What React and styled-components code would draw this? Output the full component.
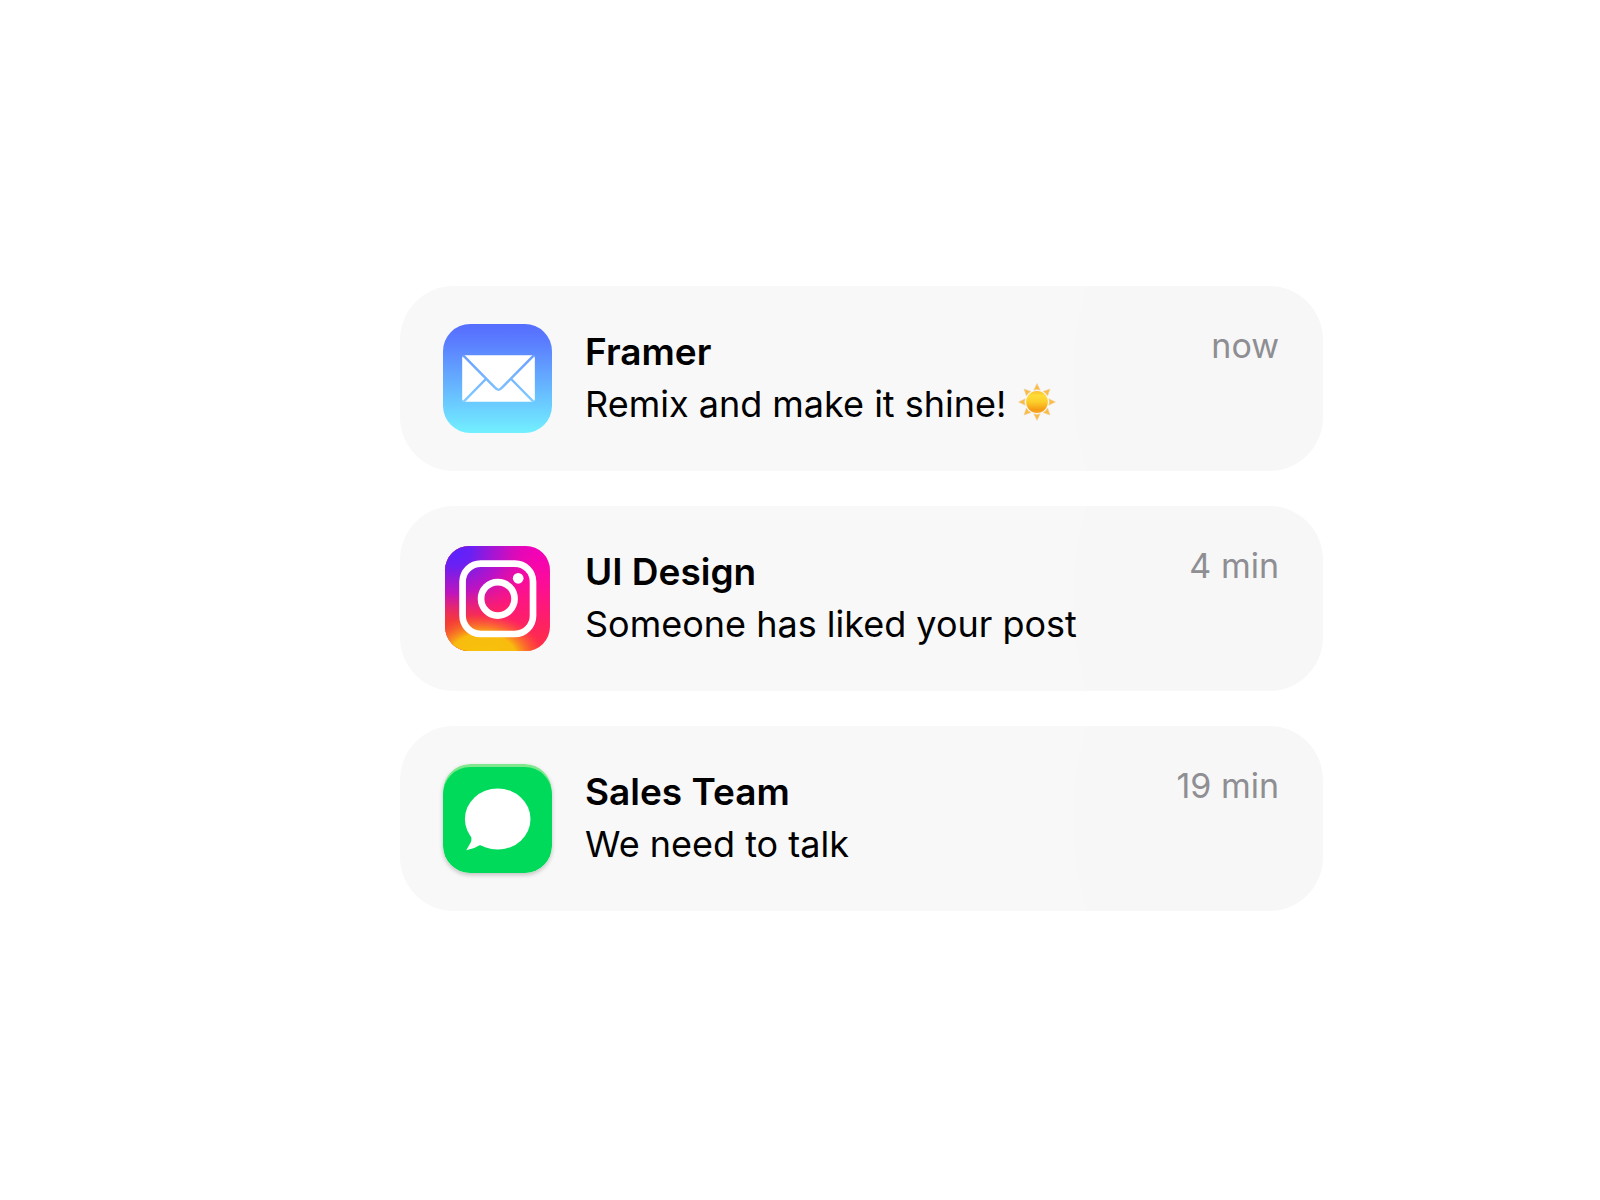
import React from "react";
import styled, { createGlobalStyle } from "styled-components";

const notifications = [
  { title: "Framer", message: "Remix and make it shine!", time: "now", Icon: MailIcon, sunny: true },
  { title: "UI Design", message: "Someone has liked your post", time: "4 min", Icon: InstagramIcon },
  { title: "Sales Team", message: "We need to talk", time: "19 min", Icon: MessagesIcon },
];

export default function App() {
  return (
    <>
      <GlobalStyle />
      <Page>
        <List>
          {notifications.map(({ title, message, time, Icon, sunny }) => (
            <Card key={title}>
              <Icon />
              <Content>
                <Title>{title}</Title>
                <Message>
                  {message}
                  {sunny && <Sun />}
                </Message>
              </Content>
              <Time>{time}</Time>
            </Card>
          ))}
        </List>
      </Page>
    </>
  );
}

function MailIcon() {
  return (
    <AppIcon viewBox="0 0 108 108" role="img" aria-label="Mail">
      <defs>
        <linearGradient id="mail-bg" x1="0" y1="0" x2="0" y2="1">
          <stop offset="0" stopColor="#566eff" />
          <stop offset="0.15" stopColor="#5a7bff" />
          <stop offset="1" stopColor="#72f0ff" />
        </linearGradient>
        <linearGradient id="mail-line" gradientUnits="userSpaceOnUse" x1="0" y1="30" x2="0" y2="78">
          <stop offset="0" stopColor="#6b9dff" />
          <stop offset="1" stopColor="#83ceff" />
        </linearGradient>
      </defs>
      <rect width="108" height="108" rx="27" fill="url(#mail-bg)" />
      <rect x="19" y="31" width="72" height="46" rx="3" fill="#fff" />
      <g fill="none" stroke="url(#mail-line)" strokeWidth="2.4">
        <path d="M20 31 51.5 63Q55 67.500 58.500 63L90 31" />
        <path d="M20.500 77 42.500 54.500M89.500 77 67.500 54.500" />
      </g>
    </AppIcon>
  );
}

function InstagramIcon() {
  return (
    <AppIcon viewBox="0 0 108 108" role="img" aria-label="Instagram">
      <defs>
        <linearGradient id="ig-base" x1="0" y1="0" x2="0" y2="1">
          <stop offset="0" stopColor="#f000bd" />
          <stop offset="0.35" stopColor="#fc0c98" />
          <stop offset="1" stopColor="#ff3040" />
        </linearGradient>
        <linearGradient id="ig-left" x1="0" y1="0" x2="1" y2="0">
          <stop offset="0" stopColor="#f33c35" />
          <stop offset="0.2" stopColor="#f33c35" stopOpacity="0.85" />
          <stop offset="0.7" stopColor="#ff2060" stopOpacity="0" />
        </linearGradient>
        <radialGradient id="ig-violet" cx="0.08" cy="0.05" r="0.8" gradientTransform="translate(0 0.005) scale(1 0.84)">
          <stop offset="0" stopColor="#5a22ff" />
          <stop offset="0.22" stopColor="#6b20f2" />
          <stop offset="0.6" stopColor="#b810cc" stopOpacity="0.9" />
          <stop offset="1" stopColor="#e80ca8" stopOpacity="0" />
        </radialGradient>
        <radialGradient id="ig-yellow" cx="0.36" cy="1.06" r="0.58" gradientTransform="translate(0 0.3) scale(1 0.72)">
          <stop offset="0" stopColor="#f7c40a" />
          <stop offset="0.55" stopColor="#f8bb0e" />
          <stop offset="1" stopColor="#fb6a26" stopOpacity="0" />
        </radialGradient>
      </defs>
      <rect x="2" y="2" width="104" height="104" rx="24" fill="url(#ig-base)" />
      <rect x="2" y="2" width="104" height="104" rx="24" fill="url(#ig-left)" />
      <rect x="2" y="2" width="104" height="104" rx="24" fill="url(#ig-violet)" />
      <rect x="2" y="2" width="104" height="104" rx="24" fill="url(#ig-yellow)" />
      <g fill="none" stroke="#fff" strokeWidth="6.6">
        <rect x="19.400" y="19.400" width="69.800" height="69.800" rx="18" />
        <circle cx="54.300" cy="54.300" r="16.600" />
      </g>
      <circle cx="74.500" cy="34" r="5.300" fill="#fff" />
    </AppIcon>
  );
}

function MessagesIcon() {
  return (
    <ShadowIcon viewBox="0 0 108 108" role="img" aria-label="Messages">
      <defs>
        <clipPath id="messages-shape">
          <rect width="108" height="108" rx="27" />
        </clipPath>
      </defs>
      <g clipPath="url(#messages-shape)">
        <rect width="108" height="108" fill="#7fe88f" />
        <rect y="3" width="108" height="108" rx="27" fill="#00da5a" />
      </g>
      <ellipse cx="54.200" cy="54.500" rx="32.500" ry="30.300" fill="#fff" />
      <path d="M26 69Q30 73 27 78.500L23 85.500Q31 84 36.800 80.200L46 83 40 66Z" fill="#fff" />
    </ShadowIcon>
  );
}

function Sun() {
  const rays = [0, 45, 90, 135, 180, 225, 270, 315];
  return (
    <Emoji viewBox="0 0 38 38" role="img" aria-label="Sun">
      <defs>
        <linearGradient id="sun-disc" x1="0" y1="0" x2="0" y2="1">
          <stop offset="0" stopColor="#fbc02d" />
          <stop offset="0.2" stopColor="#ffdc38" />
          <stop offset="0.5" stopColor="#fdce2a" />
          <stop offset="0.85" stopColor="#f59c14" />
          <stop offset="1" stopColor="#f6a92a" />
        </linearGradient>
      </defs>
      {rays.map((angle) => (
        <path
          key={angle}
          d="M19 .6 22.200 7.200Q19 6 15.800 7.200Z"
          transform={`rotate(${angle} 19 19)`}
          fill="#f8bd40"
          stroke="#f3cfa6"
          strokeWidth="0.6"
        />
      ))}
      <circle cx="19" cy="19" r="10.900" fill="url(#sun-disc)" />
    </Emoji>
  );
}

const GlobalStyle = createGlobalStyle`
  * {
    box-sizing: border-box;
  }
  body {
    margin: 0;
    background: #fff;
    font-family: Inter, "Liberation Sans", sans-serif;
  }
`;

const Page = styled.main`
  min-height: 100vh;
  display: flex;
  align-items: center;
  padding: 0 277px 3px 25%;
`;

const List = styled.ul`
  flex: 1;
  display: flex;
  flex-direction: column;
  gap: 35px;
  margin: 0;
  padding: 0;
  list-style: none;
`;

const Card = styled.li`
  display: flex;
  align-items: flex-start;
  gap: 33px;
  padding: 38px 44px 38px 43px;
  border-radius: 54px;
  background: radial-gradient(circle 320px at calc(100% + 70px) 50%, #f7f7f7 100%, #f8f8f8 100%);
`;

const AppIcon = styled.svg`
  flex: none;
  display: block;
  width: 109px;
  height: 109px;
`;

const ShadowIcon = styled(AppIcon)`
  border-radius: 27px;
  box-shadow: 0 2px 4px rgba(0, 0, 0, 0.22);
`;

const Content = styled.div`
  flex: 1;
  min-width: 0;
  padding-top: 2px;
  line-height: 52px;
  color: #000;
`;

const Title = styled.h2`
  margin: 0;
  font-size: 37px;
  font-weight: 600;
`;

const Message = styled.p`
  margin: 0;
  font-size: 36px;
`;

const Time = styled.time`
  font-size: 34px;
  line-height: 44px;
  color: #8e8e93;
`;

const Emoji = styled.svg`
  width: 38px;
  height: 38px;
  margin-left: 12px;
  vertical-align: -4px;
`;
